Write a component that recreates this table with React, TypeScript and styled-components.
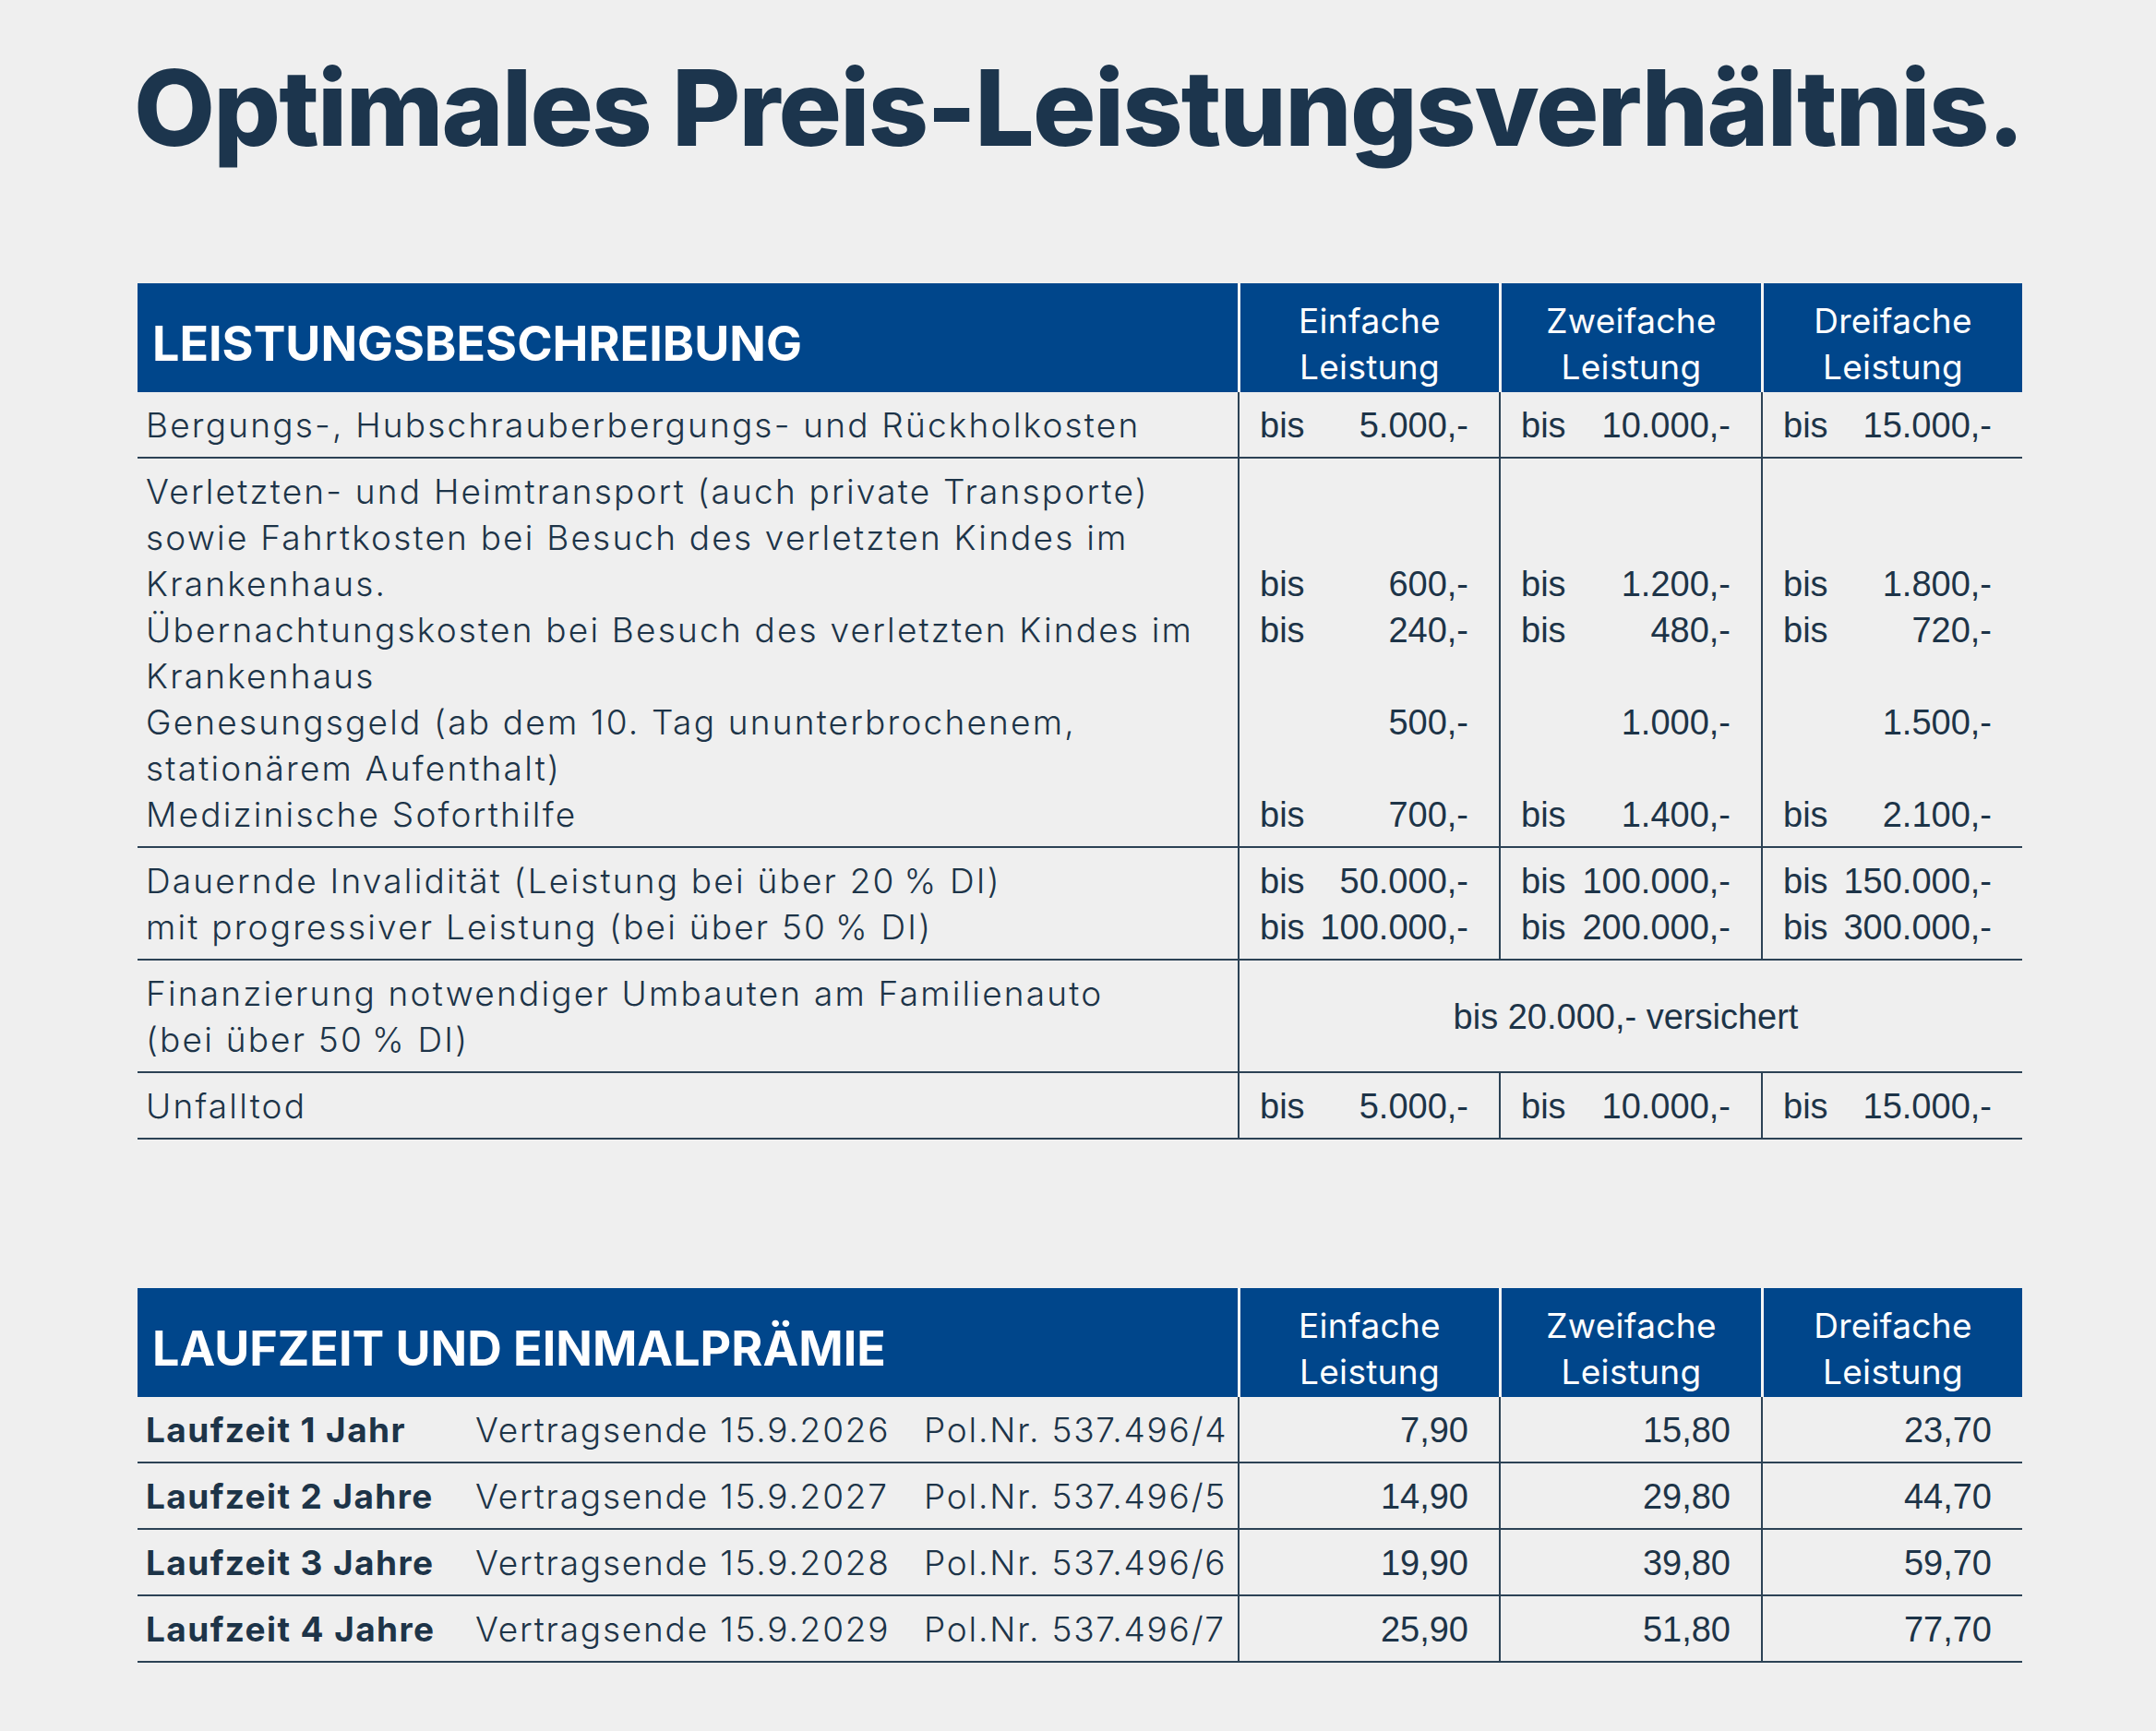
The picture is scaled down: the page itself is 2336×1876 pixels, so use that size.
import React from "react";
import styled, { createGlobalStyle } from "styled-components";

const GlobalStyle = createGlobalStyle`
  html, body { margin: 0; padding: 0; background: #efefef; }
  * { box-sizing: border-box; }
`;

const INK = "#1d3448";
const BLUE = "#00468b";
const RULE = "#2c4255";
const SANS = `"Inter", "Noto Sans", sans-serif`;
const NUM = `"Liberation Sans", Arial, sans-serif`;

const Page = styled.main`
  width: 2336px;
  min-height: 1876px;
  padding: 47px 145px 40px 149px;
  color: ${INK};
  font-family: ${SANS};
`;

const Title = styled.h1`
  margin: 0 0 120px -4px;
  font-family: ${SANS};
  font-weight: 800;
  font-size: 114px;
  line-height: 140px;
  letter-spacing: -1.75px;
  white-space: nowrap;
  color: #1c354d;
`;

const Table = styled.section<{ $gapAfter?: number }>`
  width: 2042px;
  margin-bottom: ${(p) => p.$gapAfter ?? 0}px;
`;

const Row = styled.div<{ $head?: boolean }>`
  display: grid;
  grid-template-columns: 1192px 283px 284px 283px;
  border-bottom: ${(p) => (p.$head ? "none" : `2px solid ${RULE}`)};
`;

const HeadTitle = styled.div`
  background: ${BLUE};
  color: #fff;
  height: 118px;
  display: flex;
  align-items: flex-end;
  padding: 0 0 26px 16px;
  font-weight: 700;
  font-size: 52px;
  line-height: 1;
  letter-spacing: 0;
`;

const HeadCol = styled.div`
  background: ${BLUE};
  color: #fff;
  height: 118px;
  border-left: 3px solid #f4f4f4;
  padding-top: 16px;
  text-align: center;
  font-weight: 400;
  font-size: 37px;
  line-height: 50px;
  letter-spacing: 0.3px;
`;

const Desc = styled.div`
  padding: 11px 0 9px 9px;
  font-weight: 300;
  font-size: 37px;
  line-height: 50px;
  letter-spacing: 2.2px;
`;

const Term = styled.div`
  padding: 11px 0 9px 9px;
  display: grid;
  grid-template-columns: 357px 486px auto;
  font-size: 37px;
  line-height: 50px;
  font-weight: 300;
  letter-spacing: 1.8px;
  white-space: nowrap;
`;

const TermName = styled.span`
  font-weight: 700;
  letter-spacing: 1.4px;
`;

const Value = styled.div<{ $span?: number; $center?: boolean }>`
  grid-column: span ${(p) => p.$span ?? 1};
  border-left: 2px solid ${RULE};
  padding: 11px 33px 9px 22px;
  font-family: ${NUM};
  font-size: 38px;
  line-height: 50px;
  display: flex;
  flex-direction: column;
  justify-content: ${(p) => (p.$center ? "center" : "flex-start")};
  align-items: ${(p) => (p.$center ? "center" : "stretch")};
`;

const Line = styled.div<{ $right?: boolean }>`
  height: 50px;
  display: flex;
  justify-content: ${(p) => (p.$right ? "flex-end" : "space-between")};
  white-space: nowrap;
`;

type Amt = [string, string] | null;

const Amount = ({ a }: { a: Amt }) =>
  a ? (
    <Line $right={!a[0]}>
      {a[0] && <span>{a[0]}</span>}
      <span>{a[1]}</span>
    </Line>
  ) : (
    <Line />
  );

const benefits: { desc: React.ReactNode; cols: Amt[][] }[] = [
  {
    desc: "Bergungs-, Hubschrauberbergungs- und Rückholkosten",
    cols: [[["bis", "5.000,-"]], [["bis", "10.000,-"]], [["bis", "15.000,-"]]],
  },
  {
    desc: (
      <>
        Verletzten- und Heimtransport (auch private Transporte)
        <br />
        sowie Fahrtkosten bei Besuch des verletzten Kindes im
        <br />
        Krankenhaus.
        <br />
        Übernachtungskosten bei Besuch des verletzten Kindes im
        <br />
        Krankenhaus
        <br />
        Genesungsgeld (ab dem 10. Tag ununterbrochenem,
        <br />
        stationärem Aufenthalt)
        <br />
        Medizinische Soforthilfe
      </>
    ),
    cols: [
      [null, null, ["bis", "600,-"], ["bis", "240,-"], null, ["", "500,-"], null, ["bis", "700,-"]],
      [null, null, ["bis", "1.200,-"], ["bis", "480,-"], null, ["", "1.000,-"], null, ["bis", "1.400,-"]],
      [null, null, ["bis", "1.800,-"], ["bis", "720,-"], null, ["", "1.500,-"], null, ["bis", "2.100,-"]],
    ],
  },
  {
    desc: (
      <>
        Dauernde Invalidität (Leistung bei über 20{"\u2009"}% DI)
        <br />
        mit progressiver Leistung (bei über 50{"\u2009"}% DI)
      </>
    ),
    cols: [
      [["bis", "50.000,-"], ["bis", "100.000,-"]],
      [["bis", "100.000,-"], ["bis", "200.000,-"]],
      [["bis", "150.000,-"], ["bis", "300.000,-"]],
    ],
  },
];

const terms = [
  { name: "Laufzeit 1 Jahr", end: "15.9.2026", pol: "537.496/4", p: ["7,90", "15,80", "23,70"] },
  { name: "Laufzeit 2 Jahre", end: "15.9.2027", pol: "537.496/5", p: ["14,90", "29,80", "44,70"] },
  { name: "Laufzeit 3 Jahre", end: "15.9.2028", pol: "537.496/6", p: ["19,90", "39,80", "59,70"] },
  { name: "Laufzeit 4 Jahre", end: "15.9.2029", pol: "537.496/7", p: ["25,90", "51,80", "77,70"] },
];

const Head = ({ title }: { title: string }) => (
  <Row $head>
    <HeadTitle>{title}</HeadTitle>
    {["Einfache", "Zweifache", "Dreifache"].map((k) => (
      <HeadCol key={k}>
        {k}
        <br />
        Leistung
      </HeadCol>
    ))}
  </Row>
);

export default function App() {
  return (
    <Page>
      <GlobalStyle />
      <Title>Optimales Preis-Leistungsverhältnis.</Title>

      <Table $gapAfter={161}>
        <Head title="LEISTUNGSBESCHREIBUNG" />
        {benefits.map((b, i) => (
          <Row key={i}>
            <Desc>{b.desc}</Desc>
            {b.cols.map((c, j) => (
              <Value key={j}>
                {c.map((a, k) => (
                  <Amount key={k} a={a} />
                ))}
              </Value>
            ))}
          </Row>
        ))}
        <Row>
          <Desc>
            Finanzierung notwendiger Umbauten am Familienauto
            <br />
            (bei über 50{"\u2009"}% DI)
          </Desc>
          <Value $span={3} $center>
            bis 20.000,- versichert
          </Value>
        </Row>
        <Row>
          <Desc>Unfalltod</Desc>
          <Value>
            <Amount a={["bis", "5.000,-"]} />
          </Value>
          <Value>
            <Amount a={["bis", "10.000,-"]} />
          </Value>
          <Value>
            <Amount a={["bis", "15.000,-"]} />
          </Value>
        </Row>
      </Table>

      <Table>
        <Head title="LAUFZEIT UND EINMALPRÄMIE" />
        {terms.map((t) => (
          <Row key={t.name}>
            <Term>
              <TermName>{t.name}</TermName>
              <span>Vertragsende {t.end}</span>
              <span>Pol.Nr. {t.pol}</span>
            </Term>
            {t.p.map((v, j) => (
              <Value key={j}>
                <Amount a={["", v]} />
              </Value>
            ))}
          </Row>
        ))}
      </Table>
    </Page>
  );
}
